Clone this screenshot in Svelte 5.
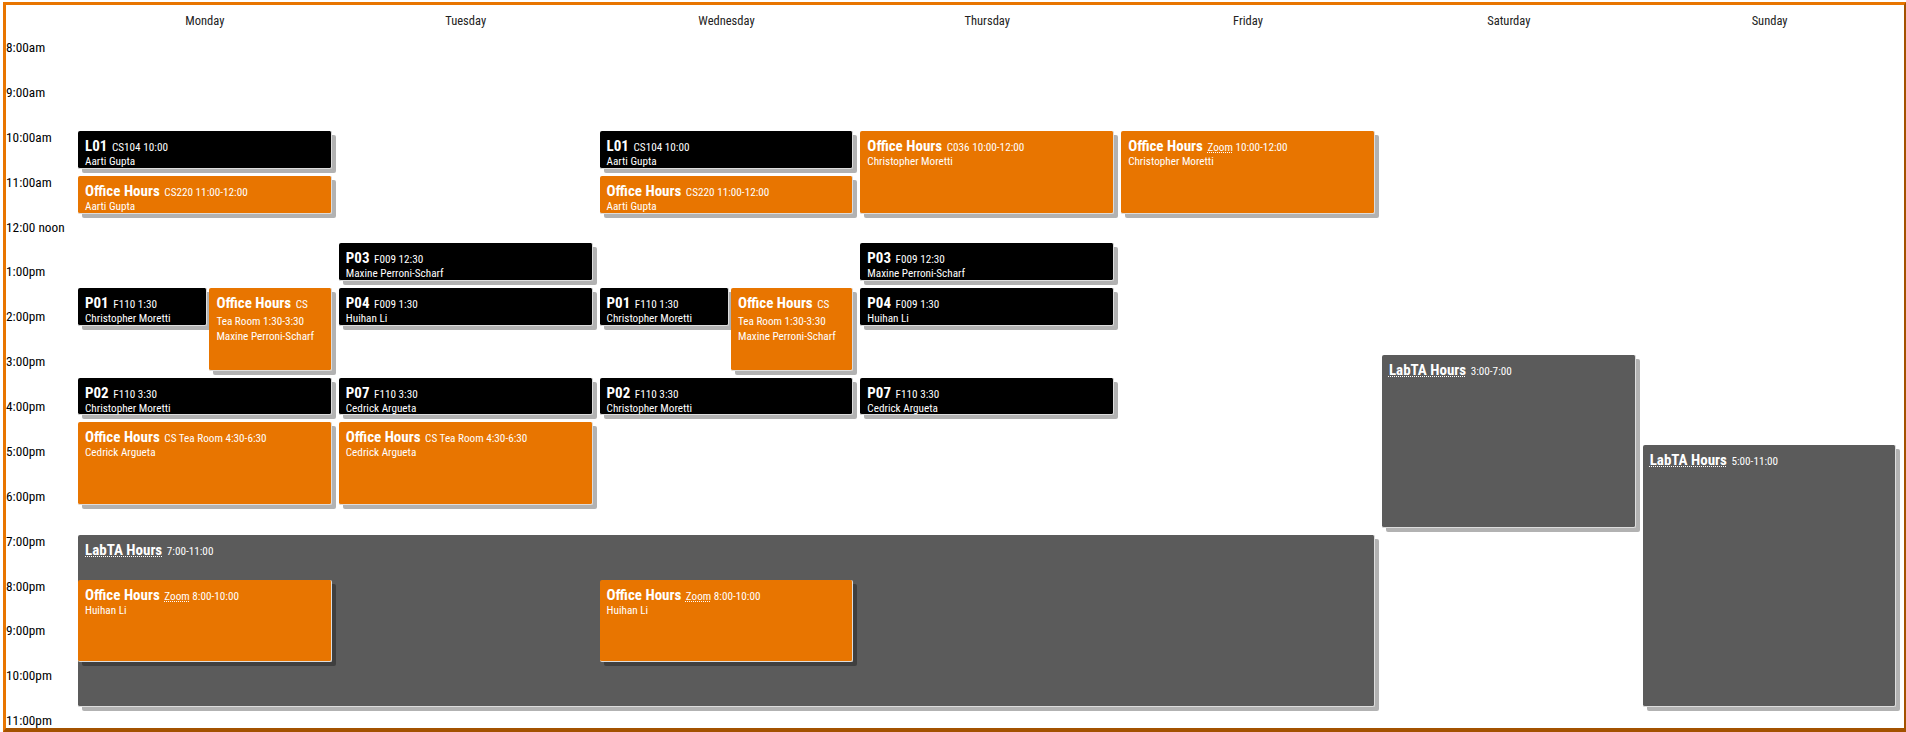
<script>
  const hours = ['8:00am','9:00am','10:00am','11:00am','12:00 noon','1:00pm','2:00pm','3:00pm','4:00pm','5:00pm','6:00pm','7:00pm','8:00pm','9:00pm','10:00pm','11:00pm'];
  const days = ['Monday','Tuesday','Wednesday','Thursday','Friday','Saturday','Sunday'];
  const colOf = (d, span = 2) => `${d * 2 + 2} / span ${span}`;
  const rowOf = (h, dur) => `${(h - 8) * 2 + 2} / span ${dur * 2}`;
  const lec = (name, where, time, who) => ({ name, where, time, who, kind: 'black' });
  const oh = (where, time, who, dotted = false) => ({ name: 'Office Hours', where, time, who, kind: 'orange', dotted });
  const lab = (time) => ({ name: 'LabTA Hours', where: '', time, who: '', kind: 'gray', nameDotted: true });
  const events = [
    [lec('L01','CS104','10:00','Aarti Gupta'), 0, 2, 10, 1],
    [oh('CS220','11:00-12:00','Aarti Gupta'), 0, 2, 11, 1],
    [lec('P01','F110','1:30','Christopher Moretti'), 0, 1, 13.5, 1],
    [oh('CS','Tea Room 1:30-3:30','Maxine Perroni-Scharf'), 0.5, 1, 13.5, 2],
    [lec('P02','F110','3:30','Christopher Moretti'), 0, 2, 15.5, 1],
    [oh('CS','Tea Room 4:30-6:30','Cedrick Argueta'), 0, 2, 16.5, 2],
    [lec('P03','F009','12:30','Maxine Perroni-Scharf'), 1, 2, 12.5, 1],
    [lec('P04','F009','1:30','Huihan Li'), 1, 2, 13.5, 1],
    [lec('P07','F110','3:30','Cedrick Argueta'), 1, 2, 15.5, 1],
    [oh('CS','Tea Room 4:30-6:30','Cedrick Argueta'), 1, 2, 16.5, 2],
    [lec('L01','CS104','10:00','Aarti Gupta'), 2, 2, 10, 1],
    [oh('CS220','11:00-12:00','Aarti Gupta'), 2, 2, 11, 1],
    [lec('P01','F110','1:30','Christopher Moretti'), 2, 1, 13.5, 1],
    [oh('CS','Tea Room 1:30-3:30','Maxine Perroni-Scharf'), 2.5, 1, 13.5, 2],
    [lec('P02','F110','3:30','Christopher Moretti'), 2, 2, 15.5, 1],
    [oh('C036','10:00-12:00','Christopher Moretti'), 3, 2, 10, 2],
    [lec('P03','F009','12:30','Maxine Perroni-Scharf'), 3, 2, 12.5, 1],
    [lec('P04','F009','1:30','Huihan Li'), 3, 2, 13.5, 1],
    [lec('P07','F110','3:30','Cedrick Argueta'), 3, 2, 15.5, 1],
    [oh('Zoom','10:00-12:00','Christopher Moretti', true), 4, 2, 10, 2],
    [lab('3:00-7:00'), 5, 2, 15, 4],
    [lab('5:00-11:00'), 6, 2, 17, 6],
    [lab('7:00-11:00'), 0, 10, 19, 4],
    [oh('Zoom','8:00-10:00','Huihan Li', true), 0, 2, 20, 2],
    [oh('Zoom','8:00-10:00','Huihan Li', true), 2, 2, 20, 2],
  ];
</script>

<div class="frame">
  <div class="grid">
    {#each days as d, i}
      <div class="day" style="grid-column: {colOf(i)}">{d}</div>
    {/each}
    {#each hours as h, i}
      <div class="hour" style="grid-row: {rowOf(8 + i, 1)}">{h}</div>
    {/each}
    {#each events as [e, d, span, h, dur]}
      <div class="ev {e.kind}" class:half-l={span === 1 && Number.isInteger(d)} class:half-r={span === 1 && !Number.isInteger(d)} style="grid-column: {colOf(d, span)}; grid-row: {rowOf(h, dur)}">
        <div class="line"><b class:dot={e.nameDotted}>{e.name}</b>{' '}{#if e.where}<span class:dot={e.dotted}>{e.where}</span>{' '}{/if}{e.time}</div>
        {#if e.who}<div class="who">{e.who}</div>{/if}
      </div>
    {/each}
  </div>
</div>

<style>
  :global(body) { margin: 0; overflow: hidden; }
  .frame {
    box-sizing: border-box;
    margin: 2px 0 0 3px;
    width: 1903px;
    height: 730px;
    border-style: solid;
    border-width: 3px 2px 4px 3px;
    border-color: #e87500 #a35200 #a35200 #e87500;
    overflow: hidden;
    font-family: Roboto, "Liberation Sans", sans-serif;
    font-stretch: condensed;
    font-size: 11.2px;
    color: #222;
  }
  .grid {
    display: grid;
    grid-template-columns: 72px repeat(14, 130.4px);
    grid-template-rows: 36px repeat(32, 22.45px);
  }
  .day { grid-row: 1; text-align: center; padding: 8px 7px 0 0; font-size: 12.5px; }
  .hour { grid-column: 1; font-size: 13.3px; line-height: 13px; color: #000; }
  .ev {
    box-sizing: border-box;
    margin: 0 7px 7px 0;
    padding: 8px 7px 0;
    border-radius: 2px;
    color: #fff;
    border: 1px solid #ddd;
    border-width: 0 1px 1px 0;
    box-shadow: 4px 4px 0 rgba(0, 0, 0, .3);
    line-height: 15px;
    overflow: hidden;
  }
  .who { margin-top: -1px; }
  .half-l { margin-right: 1px; }
  .half-r { margin-left: 1px; padding-right: 10px; }
  .half-r .line { line-height: 17px; margin-top: 0.5px; }
  .half-r .who { margin-top: -1.5px; }
  .line b { font-size: 15px; font-weight: 700; line-height: 15px; margin-right: 2px; }
  .black { background: #000; }
  .orange { background: #e87500; }
  .gray { background: #5b5b5b; }
  .dot { text-decoration: underline dotted 1px; text-underline-offset: 1px; }
</style>
